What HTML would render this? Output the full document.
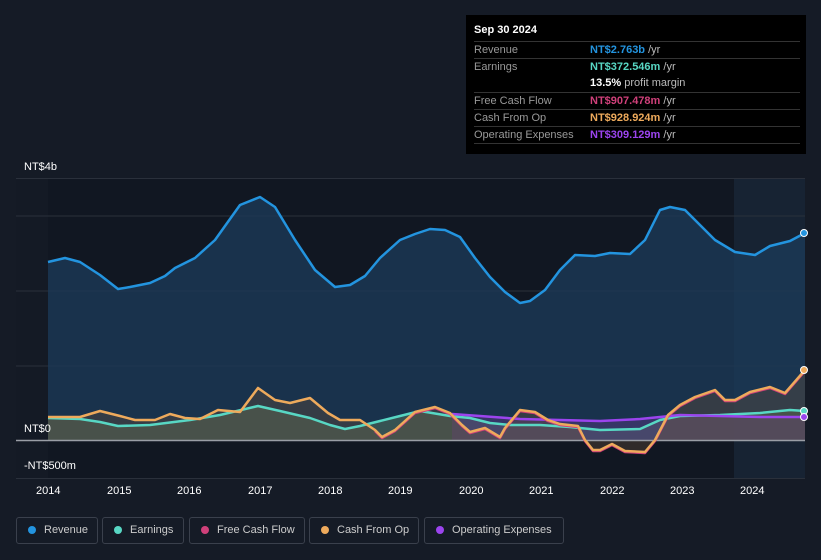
<!DOCTYPE html>
<html><head><style>
body{margin:0;width:821px;height:560px;background:#151b26;font-family:"Liberation Sans",sans-serif;overflow:hidden;position:relative}
.t{position:absolute;font-size:11px;color:#fff}
.tt{position:absolute;left:466px;top:15px;width:340px;height:139px;background:#000}
.row{position:absolute;left:8px;width:326px;height:17px;border-top:1px solid #333;font-size:11px;color:#999}
.row span{position:absolute;left:0;top:2px}
.row b{position:absolute;left:116px;top:2px;font-weight:bold}
.row i{font-style:normal;font-weight:normal;color:#bbb}
.lg{position:absolute;top:517px;height:27px;border:1px solid #3a404c;border-radius:3px;font-size:11px;color:#ccc;box-sizing:border-box;line-height:25px;padding-left:27px}
.lg:before{content:"";position:absolute;left:11px;top:8px;width:8px;height:8px;border-radius:50%;background:var(--c)}
</style></head><body>
<svg width="821" height="560" style="position:absolute;left:0;top:0">
<rect x="16" y="178" width="789" height="300" fill="#141a25"/>
<rect x="48" y="178" width="686" height="300" fill="#111722"/>
<rect x="734" y="178" width="71" height="300" fill="#172333"/>
<g stroke="#2a303b" stroke-width="1"><line x1="16" y1="178.5" x2="805" y2="178.5"/><line x1="16" y1="216" x2="805" y2="216"/><line x1="16" y1="291" x2="805" y2="291"/><line x1="16" y1="366" x2="805" y2="366"/><line x1="16" y1="478.5" x2="805" y2="478.5"/></g>
<path d="M48,262 L65,258 80,262 100,275 118,289 130,287 150,283 165,276 175,268 195,258 215,240 240,205 260,197 275,207 295,240 315,270 335,287 350,285 365,276 380,258 400,240 415,234 430,229 445,230 460,237 475,258 490,277 505,292 520,303 530,301 545,290 560,270 575,255 595,256 610,253 630,254 645,240 660,210 670,207 685,210 700,225 715,240 735,252 755,255 770,246 790,241 805,233 L805,440 L48,440Z" fill="#1b3a58" fill-opacity="0.8"/>
<path d="M48,418 L80,419 100,422 118,426 150,425 190,420 220,415 258,406 280,411 310,418 330,425 345,429 360,426 380,421 400,416 420,411 450,416 470,418 490,423 510,425 540,425 570,427 600,430 640,429 660,420 680,416 720,415 760,413 790,410 805,411 L805,440 48,440Z" fill="#3e5a55" fill-opacity="0.8"/>
<path d="M452,414 L480,416 520,419 560,420 600,421 640,419 680,415 720,416 760,417 805,417 L805,440 452,440Z" fill="#5a3a8a" fill-opacity="0.45"/>
<path d="M48,417 L80,417 100,411 120,416 135,420 155,420 170,414 185,418 200,419 218,410 240,412 258,388 275,400 290,403 310,398 328,413 340,420 360,420 375,430 382,437 395,430 415,412 435,407 450,413 462,425 470,432 485,428 500,437 505,428 520,410 535,412 548,420 560,424 578,426 585,440 593,450 600,450 612,444 625,451 645,452 655,440 668,415 680,405 695,397 715,390 725,400 735,400 750,392 770,387 785,393 805,370 L805,440 48,440Z" fill="#6a5038" fill-opacity="0.35"/>
<line x1="16" y1="440.5" x2="805" y2="440.5" stroke="#9a9ea6" stroke-width="1.5"/>
<g fill="none" stroke-width="2.5" stroke-linejoin="round">
<path d="M48,262 L65,258 80,262 100,275 118,289 130,287 150,283 165,276 175,268 195,258 215,240 240,205 260,197 275,207 295,240 315,270 335,287 350,285 365,276 380,258 400,240 415,234 430,229 445,230 460,237 475,258 490,277 505,292 520,303 530,301 545,290 560,270 575,255 595,256 610,253 630,254 645,240 660,210 670,207 685,210 700,225 715,240 735,252 755,255 770,246 790,241 805,233" stroke="#2394df"/>
<path d="M48,418 L80,419 100,422 118,426 150,425 190,420 220,415 258,406 280,411 310,418 330,425 345,429 360,426 380,421 400,416 420,411 450,416 470,418 490,423 510,425 540,425 570,427 600,430 640,429 660,420 680,416 720,415 760,413 790,410 805,411" stroke="#58d7c4"/>
<path d="M452,414 L480,416 520,419 560,420 600,421 640,419 680,415 720,416 760,417 805,417" stroke="#9b44ee"/>
<path transform="translate(0,1)" d="M375,430 L382,437 395,430 415,412 435,407 450,413 462,425 470,432 485,428 500,437 505,428 520,410 535,412 548,420 560,424 578,426 585,440 593,450 600,450 612,444 625,451 645,452 655,440 668,415 680,405 695,397 715,390 725,400 735,400 750,392 770,387 785,393 805,370" stroke="#d0407a"/>
<path d="M48,417 L80,417 100,411 120,416 135,420 155,420 170,414 185,418 200,419 218,410 240,412 258,388 275,400 290,403 310,398 328,413 340,420 360,420 375,430 382,437 395,430 415,412 435,407 450,413 462,425 470,432 485,428 500,437 505,428 520,410 535,412 548,420 560,424 578,426 585,440 593,450 600,450 612,444 625,451 645,452 655,440 668,415 680,405 695,397 715,390 725,400 735,400 750,392 770,387 785,393 805,370" stroke="#eeaa5c"/>
</g>
<circle cx="804" cy="233" r="3.5" fill="#2394df" stroke="#fff"/>
<circle cx="804" cy="370" r="3.5" fill="#eeaa5c" stroke="#fff"/>
<circle cx="804" cy="411" r="3.5" fill="#58d7c4" stroke="#fff"/>
<circle cx="804" cy="417" r="3.5" fill="#9b44ee" stroke="#fff"/>
</svg>
<div class="t" style="left:24px;top:161px">NT$4b</div>
<div class="t" style="left:24px;top:423px">NT$0</div>
<div class="t" style="left:24px;top:460px">-NT$500m</div>
<div class="t" style="left:36px;top:485px">2014</div><div class="t" style="left:107px;top:485px">2015</div><div class="t" style="left:177px;top:485px">2016</div><div class="t" style="left:248px;top:485px">2017</div><div class="t" style="left:318px;top:485px">2018</div><div class="t" style="left:388px;top:485px">2019</div><div class="t" style="left:459px;top:485px">2020</div><div class="t" style="left:529px;top:485px">2021</div><div class="t" style="left:600px;top:485px">2022</div><div class="t" style="left:670px;top:485px">2023</div><div class="t" style="left:740px;top:485px">2024</div>
<div class="tt">
<div style="position:absolute;left:8px;top:9px;font-size:11px;color:#fff;font-weight:bold">Sep 30 2024</div>
<div class="row" style="top:26px"><span>Revenue</span><b style="color:#2394df">NT$2.763b <i>/yr</i></b></div>
<div class="row" style="top:43px"><span>Earnings</span><b style="color:#58d7c4">NT$372.546m <i>/yr</i></b></div>
<div class="row" style="top:60px;border-top:none"><b style="color:#fff">13.5% <i>profit margin</i></b></div>
<div class="row" style="top:77px"><span>Free Cash Flow</span><b style="color:#d0407a">NT$907.478m <i>/yr</i></b></div>
<div class="row" style="top:94px"><span>Cash From Op</span><b style="color:#eeaa5c">NT$928.924m <i>/yr</i></b></div>
<div class="row" style="top:111px"><span>Operating Expenses</span><b style="color:#9b44ee">NT$309.129m <i>/yr</i></b></div>
<div class="row" style="top:128px;height:0"></div>
</div>
<div class="lg" style="left:16px;width:82px;--c:#2394df">Revenue</div>
<div class="lg" style="left:102px;width:82px;--c:#58d7c4">Earnings</div>
<div class="lg" style="left:189px;width:116px;--c:#d0407a">Free Cash Flow</div>
<div class="lg" style="left:309px;width:110px;--c:#eeaa5c">Cash From Op</div>
<div class="lg" style="left:424px;width:140px;--c:#9b44ee">Operating Expenses</div>
</body></html>
